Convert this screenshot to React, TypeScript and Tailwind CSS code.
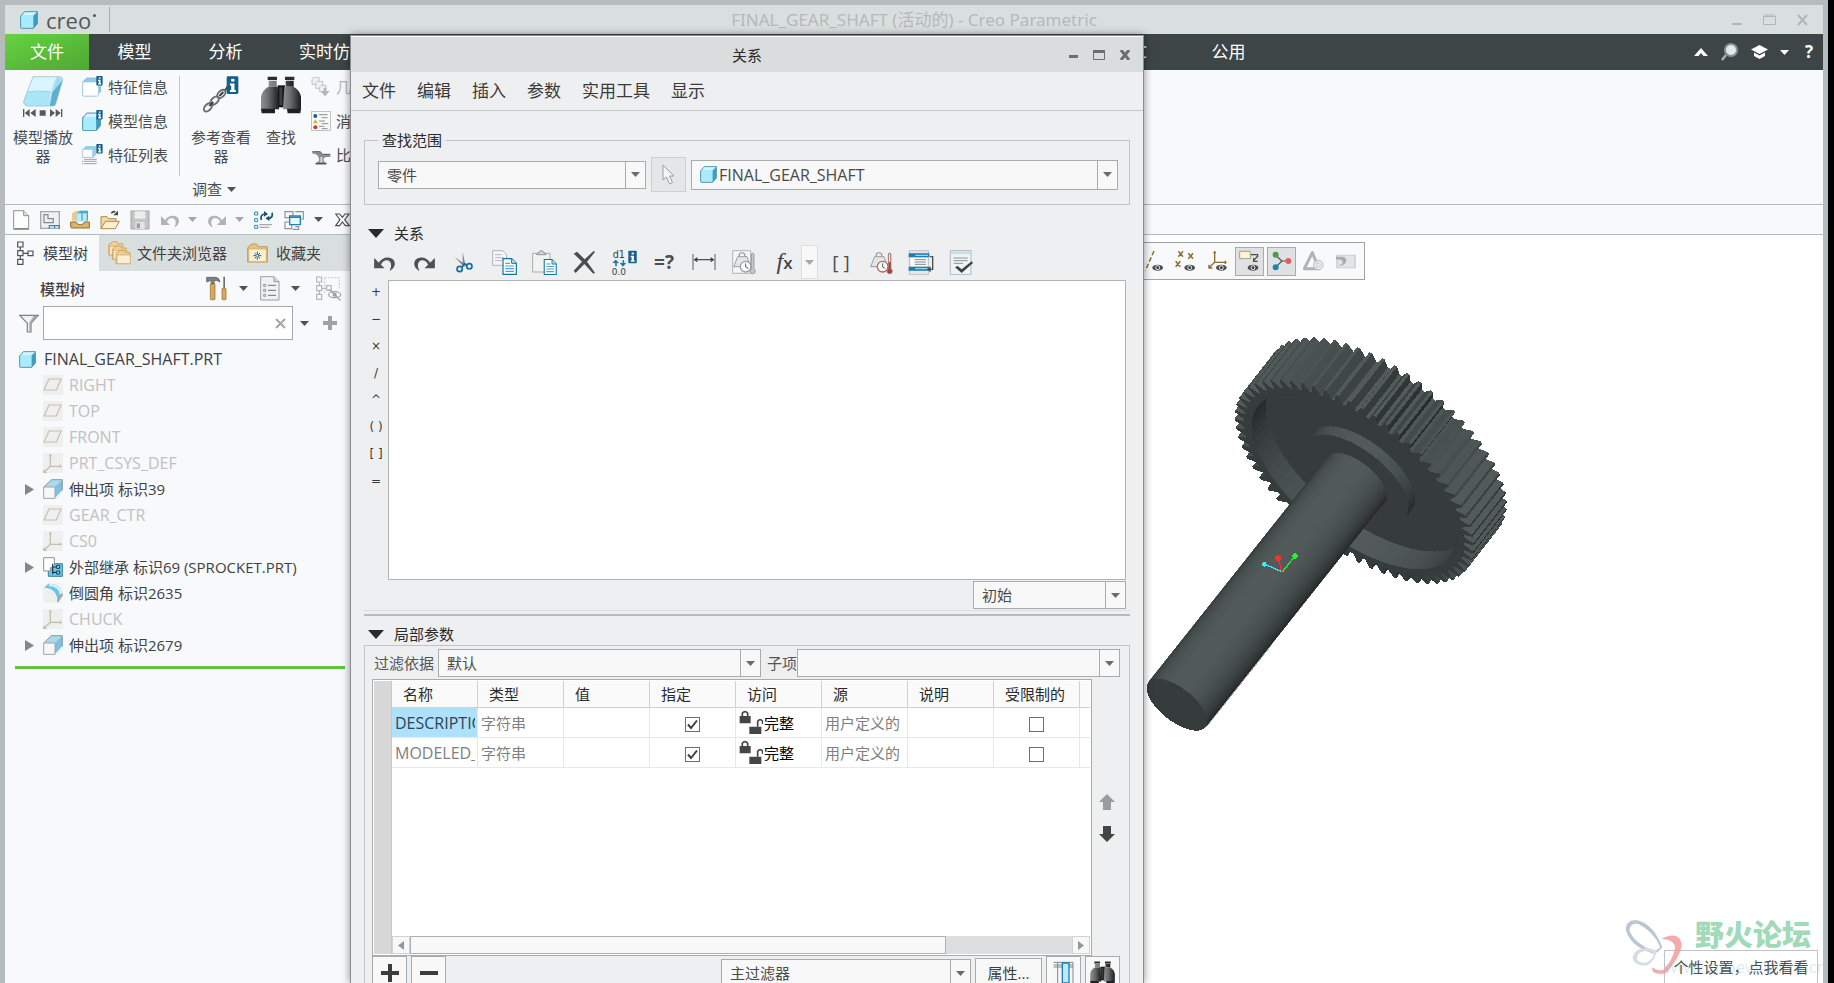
import type { ReactNode } from 'react';

/* ---------- icon helpers ---------- */

interface IconProps {
  w?: number;
  h?: number;
  box?: string;
  children: ReactNode;
}

// most glyphs are drawn on a 60 unit grid and shown at a third of that size
function Icon({ w = 20, h = 20, box, children }: IconProps) {
  return (
    <svg width={w} height={h} viewBox={box ?? `0 0 ${w * 3} ${h * 3}`} fill="none" className="shrink-0" aria-hidden="true">
      {children}
    </svg>
  );
}

function Caret({ color = '#4f5354' }: { color?: string }) {
  return (
    <svg width="9" height="5" viewBox="0 0 9 5" className="shrink-0" aria-hidden="true">
      <path d="M0 0h9L4.5 5z" fill={color} />
    </svg>
  );
}

function InfoBadge({ x, y, s = 1 }: { x: number; y: number; s?: number }) {
  return (
    <g transform={`translate(${x} ${y}) scale(${s})`}>
      <rect width="18" height="27" rx="2" fill="#12608a" />
      <rect x="7" y="4" width="5" height="4" fill="#fff" />
      <path d="M5 11h7v10h2v3H5v-3h2v-7H5z" fill="#fff" />
    </g>
  );
}

function CubeShape({ front = '#a9ecff' }: { front?: string }) {
  return (
    <>
      <path d="M2 14 14 2h38v36L40 52H5q-3 0-3-3z" fill="#3d9dc3" />
      <path d="M2 14 14 2h38L40 14z" fill="#d2f5ff" />
      <path d="M2 16q0-3 3-3h35v39H5q-3 0-3-3z" fill={front} />
      <path d="M2 16 14 2h38v36L40 52H5q-3 0-3-3z" stroke="#3f87a6" strokeWidth="2.5" />
    </>
  );
}

const CubeIcon = ({ size = 17 }: { size?: number }) => (
  <Icon w={size} h={size} box="0 0 54 54">
    <CubeShape />
  </Icon>
);

const FeatureInfoIcon = () => (
  <Icon w={21} h={21} box="0 0 63 63">
    <path d="M2 18 14 6h42v40L44 60H6q-4 0-4-4z" fill="#8fcbe3" stroke="#74b4cf" strokeWidth="2" />
    <path d="M2 22q0-4 4-4h38q5 0 5 5v37H6q-4 0-4-4z" fill="#fff" stroke="#9cc7d8" strokeWidth="2" />
    <InfoBadge x={43} y={0} s={1.05} />
  </Icon>
);

const ModelInfoIcon = () => (
  <Icon w={21} h={21} box="0 0 63 63">
    <g transform="translate(0 7) scale(1.06)">
      <CubeShape />
    </g>
    <InfoBadge x={43} y={0} s={1.05} />
  </Icon>
);

const FeatureListIcon = () => (
  <Icon w={21} h={21} box="0 0 63 63">
    <path d="M2 16 12 6h30v26L32 42H2z" fill="#8fd2ea" />
    <path d="M2 16h30v24H2z" fill="#fff" stroke="#93c8dd" strokeWidth="2" />
    <path d="M6 46h38M0 52h4M6 52h38M0 59h4M6 59h38" stroke="#9fa3a5" strokeWidth="3" />
    <InfoBadge x={43} y={0} s={1.05} />
  </Icon>
);

const PlayerIcon = () => (
  <Icon w={40} h={42} box="0 0 120 126">
    <path d="M30 2h82q8 2 7 10L98 84q-2 6-8 6H14Q2 88 2 76z" fill="#c8edf8" />
    <path d="M88 48 119 12 98 84q-2 6-8 6H80z" fill="#5fb0cf" />
    <path d="M88 48 117 12Q112 2 100 4z" fill="#9adcf2" />
    <path d="M30 2h74q-12 6-22 46Q56 42 12 50z" fill="#d9f5fd" />
    <path d="M12 50q40-6 70 0Q80 70 80 89H14Q2 88 2 76z" fill="#a8e6f8" />
    <path d="M30 2h82q8 2 7 10L98 84q-2 6-8 6H14Q2 88 2 76zM12 48q38-6 72 0" stroke="#8bb9ca" strokeWidth="2" />
    <g fill="#565a5c">
      <path d="M0 99h4v24H0zM20 99v24L5 111zM38 99v24L22 111zM50 103h18v16H50zM81 99v24l15-12zM98 99v24l15-12zM114 99h4v24h-4z" />
    </g>
  </Icon>
);

const ChainIcon = () => (
  <Icon w={38} h={38} box="0 0 114 114">
    <g stroke="#6b7072" strokeWidth="6">
      <ellipse cx="58" cy="54" rx="15" ry="9" transform="rotate(-45 58 54)" />
      <ellipse cx="38" cy="74" rx="15" ry="9" transform="rotate(-45 38 74)" />
      <ellipse cx="18" cy="94" rx="15" ry="9" transform="rotate(-45 18 94)" />
      <path d="m52 60 12-12M22 90l12-12M70 42l8-12" stroke="#3d4143" />
    </g>
    <InfoBadge x={74} y={1} s={1.95} />
  </Icon>
);

const Binoculars = ({ w = 40, h = 39 }: { w?: number; h?: number }) => (
  <Icon w={w} h={h} box="0 0 120 117">
    <defs>
      <linearGradient id="barrel" x1="0" x2="1" y1="0" y2="0">
        <stop offset="0" stopColor="#8d9091" />
        <stop offset=".4" stopColor="#6b6e6f" />
        <stop offset="1" stopColor="#1b1c1c" />
      </linearGradient>
    </defs>
    <path d="M20 2h28v10H20zM72 2h28v10H72z" fill="#2b2d2e" />
    <path d="M23 14h24v18H23zM74 14h24v18H74z" fill="url(#barrel)" />
    <path d="M50 28h22v66H50z" fill="#141515" />
    <path d="M22 32h28l4 68H0V62q4-20 22-30z" fill="url(#barrel)" />
    <path d="M98 32H70l-4 68h54V62q-4-20-22-30z" fill="url(#barrel)" />
    <path d="M0 98h42v14H2zM78 98h42l-2 14H80z" fill="#1f2121" />
    <path d="M55 34h9v54h-9z" fill="#3c3f40" />
  </Icon>
);

const GeomIcon = () => (
  <Icon>
    <g fill="#f0f1f1" stroke="#b9bcbd" strokeWidth="2.5">
      <path d="M3 6 8 1h16v16l-5 5H3z" />
      <path d="M14 18l5-5h16v16l-5 5H14z" />
      <path d="M26 30l5-5h14v14l-5 5H26z" />
    </g>
    <path d="M28 42h10V32h8v10h10L42 58z" fill="#b3b6b7" />
  </Icon>
);

const LogIcon = () => (
  <Icon>
    <path d="M1 1h58v58H1z" fill="#f8f9f9" stroke="#b5b8ba" strokeWidth="3" />
    <circle cx="13" cy="15" r="6" fill="#12608a" />
    <path d="m13 25 7 12H6z" fill="#e5a91b" />
    <circle cx="13" cy="49" r="6" fill="#c43b33" />
    <path d="M24 11h26M32 20h18M24 30h18M32 38h20M24 46h16M32 53h18" stroke="#8c9092" strokeWidth="3" />
  </Icon>
);

const CompareIcon = () => (
  <Icon>
    <path d="M4 20h24l6 8h24v8H44l-6 4v8l8 6v4H14v-4l10-6v-8l-4-8-8-6H4z" fill="#8b8f91" />
    <path d="M4 20h24l6 8h24" stroke="#5d6163" strokeWidth="3" />
    <path d="M14 56h32" stroke="#4d5153" strokeWidth="4" />
    <path d="M28 36h6v16h-6z" fill="#d7d9da" />
  </Icon>
);

/* quick access bar */

const NewIcon = () => (
  <Icon w={17} h={20}>
    <path d="M2 2h30l15 15v41H2z" fill="#fdfdfd" stroke="#8e9294" strokeWidth="3" />
    <path d="M32 2v15h15" fill="#e2e4e5" stroke="#8e9294" strokeWidth="3" />
    <path d="M4 56h42" stroke="#6d7173" strokeWidth="3" />
  </Icon>
);

const DrawingIcon = () => (
  <Icon>
    <path d="M2 5h56v50H2z" fill="#eef0f1" stroke="#a5a9ab" strokeWidth="4" />
    <path d="M12 14h12v12h16v12H12z" stroke="#85898b" strokeWidth="3.5" />
    <path d="M28 57V47h30v10M44 47v8" stroke="#2d8cb8" strokeWidth="3.5" />
  </Icon>
);

const LibraryIcon = () => (
  <Icon>
    <path d="M6 10 18 2h36v30H6z" fill="#f0c98a" />
    <path d="M20 10 30 2h24v30H20z" fill="#4ea9cd" />
    <path d="M20 10h14v26H20zM38 10h12v26H38z" fill="#b7ecfb" />
    <path d="M2 36h16q2 8 13 8t13-8h14v18H6q-4 0-4-4z" fill="#ddb46c" stroke="#8f6a2f" strokeWidth="3" />
  </Icon>
);

const OpenIcon = () => (
  <Icon>
    <path d="M3 56V20h18l5 6h22v10" fill="#f4d9a4" stroke="#b08a4c" strokeWidth="3" />
    <path d="M3 56 16 34h42L46 56z" fill="#fdf0d2" stroke="#b08a4c" strokeWidth="3" />
    <path d="M34 10q6-8 12-4" stroke="#3d4143" strokeWidth="5" />
    <path d="M54 2v14H40z" fill="#3d4143" />
  </Icon>
);

const SaveIcon = () => (
  <Icon>
    <path d="M3 3h54v54H3z" fill="#c3c6c7" stroke="#a3a6a8" strokeWidth="3" />
    <path d="M14 4h32v22H14z" fill="#eceded" />
    <path d="M16 36h28v21H16z" fill="#e3e4e5" />
    <path d="M20 40h10v15H20z" fill="#9c9fa1" />
  </Icon>
);

function UndoIcon({ color, flip = false, w = 20 }: { color: string; flip?: boolean; w?: number }) {
  return (
    <Icon w={w} h={w} box="0 0 60 60">
      <g transform={flip ? 'translate(60 0) scale(-1 1)' : undefined}>
        <path d="M14 32Q24 16 40 17q17 2 17 17-1 12-14 18 6-10 4-19-5-12-16-8-8 3-11 12z" fill={color} />
        <path d="M3 18v27h27z" fill={color} />
      </g>
    </Icon>
  );
}

const RegenIcon = () => (
  <Icon>
    <g stroke="#2d8cb8" strokeWidth="3">
      <path d="M2 6h9v9H2zM2 26h9v9H2zM2 46h9v9H2z" />
    </g>
    <path d="M16 44h38M16 52h30" stroke="#a8abad" strokeWidth="4" />
    <path d="M22 30q-4-16 10-18M54 8q4 14-10 18" stroke="#0f5578" strokeWidth="5" />
    <path d="M30 3l12 9-12 8zM46 17v16l-12-8z" fill="#0f5578" />
  </Icon>
);

const WindowsIcon = () => (
  <Icon>
    <path d="M3 5h24v18H3zM3 36h20v20H3zM34 5h24v22H44M34 50h10v8H26" stroke="#8f9395" strokeWidth="3.5" />
    <path d="M17 18h32v26H17z" fill="#e9f6fb" stroke="#2382ae" strokeWidth="4" />
    <path d="M17 22h32" stroke="#2382ae" strokeWidth="4" />
  </Icon>
);

const CloseWinIcon = () => (
  <Icon w={15} h={14}>
    <path d="M2 3h12l8 10 8-10h12L29 20l14 18H31l-9-11-8 11H2l13-18z" fill="#fdfdfd" stroke="#4b4f51" strokeWidth="3.5" />
  </Icon>
);

/* sidebar */

const TreeTabIcon = () => (
  <Icon w={17} h={25}>
    <path d="M2 3h16v15H2zM2 29h16v15H2zM2 55h16v15H2zM33 30h15v14H33zM10 18v11M10 44v11M18 37h15" stroke="#4d5153" strokeWidth="3.5" />
  </Icon>
);

const FoldersIcon = () => (
  <Icon w={24} h={24}>
    {[0, 13, 26].map((o, i) => (
      <g key={o} transform={`translate(${i * 11} ${o})`}>
        <path d="M2 12q0-4 4-4h2q2-6 6-6h10q5 0 6 6h14v34H2z" fill="#f1cd92" stroke="#c09650" strokeWidth="2" />
        <path d="M5 16h40v26H5z" fill="#fdefcf" stroke="#c9a365" strokeWidth="2" />
      </g>
    ))}
  </Icon>
);

const FavIcon = () => (
  <Icon w={21} h={20} box="0 0 63 60">
    <path d="M2 16q0-4 4-5 4-8 10-8h12q5 2 6 8h27v46H2z" fill="#e9c07c" stroke="#a9803f" strokeWidth="2" />
    <path d="M5 18h53v38H5z" fill="#fdf0d0" stroke="#c9a365" strokeWidth="2" />
    <path d="M31 26v24M19 38h24M23 30l16 16M39 30 23 46" stroke="#0f6488" strokeWidth="3" />
    <circle cx="31" cy="38" r="3" fill="#fff" />
  </Icon>
);

const ToolsIcon = () => (
  <Icon w={21} h={25}>
    <path d="M2 4h28q10 2 12 14-8-6-14-4H12L2 18z" fill="#7d8184" stroke="#4d5153" strokeWidth="2" />
    <path d="M14 16h12v8H14zM52 2h5v34h-5z" fill="#6d7173" />
    <path d="M13 24h14v46q-7 4-14 0z" fill="#d9a95e" stroke="#8f6a2f" strokeWidth="2" />
    <path d="M48 38q6-4 12 0v32q-6 4-12 0z" fill="#d9a95e" stroke="#8f6a2f" strokeWidth="2" />
  </Icon>
);

const ListDocIcon = () => (
  <Icon w={20} h={25}>
    <path d="M2 2h40l15 15v55H2z" fill="#eef2f4" stroke="#9a9ea0" strokeWidth="3" />
    <path d="M42 2v15h15" fill="#d1d5d7" stroke="#9a9ea0" strokeWidth="3" />
    <path d="M24 28h24M24 43h24M24 58h24" stroke="#6d7173" strokeWidth="3" />
    <path d="M11 25h6v6h-6zM11 40h6v6h-6zM11 55h6v6h-6z" stroke="#6d7173" strokeWidth="2" />
  </Icon>
);

const HideTreeIcon = () => (
  <Icon w={26} h={25}>
    <path d="M2 3h15v15H2zM2 29h15v15H2zM2 55h15v15H2zM32 29h14v14H32zM10 18v11M10 44v11M17 37h15" stroke="#b3b6b8" strokeWidth="3.5" />
    <path d="M26 5h44v36M26 5v46" stroke="#c5c8ca" strokeWidth="3" strokeDasharray="6 4" />
    <ellipse cx="56" cy="56" rx="18" ry="9" stroke="#9c9fa1" strokeWidth="3.5" />
    <circle cx="56" cy="56" r="6" fill="#9c9fa1" />
    <path d="m40 40 34 34" stroke="#9c9fa1" strokeWidth="3.5" />
  </Icon>
);

const FunnelIcon = () => (
  <Icon w={20} h={19}>
    <path d="M2 4h56L36 28v26H25V28z" fill="#f0f1f2" stroke="#7d8183" strokeWidth="3.5" />
    <path d="M44 6h12L36 28v24l-5-2V26z" fill="#a5a8aa" />
  </Icon>
);

const PlaneIcon = () => (
  <Icon>
    <path d="M0 0h60v60H0z" fill="#eeefee" />
    <path d="M18 12h36L40 45H3z" stroke="#c3c0ae" strokeWidth="3.5" />
  </Icon>
);

const CsysIcon = () => (
  <Icon>
    <path d="M0 0h60v60H0z" fill="#eeefee" />
    <path d="M22 4v36L4 56M22 40h34M18 8h8M52 35v9M2 50v8h9" stroke="#c3c0ae" strokeWidth="4" />
  </Icon>
);

const ExtrudeIcon = () => (
  <Icon>
    <path d="M2 26 26 2h32v32L36 58H2z" fill="#7fc0dc" />
    <path d="M2 24 26 2h32L36 24z" fill="#a9d9ec" />
    <path d="m36 58 22-24V44L44 58z" fill="#e8f7fc" />
    <path d="M2 24 26 2h32v32" stroke="#7e8a90" strokeWidth="2.5" />
    <path d="M2 24h34v34H2z" fill="#f7f7f7" stroke="#a3a6a8" strokeWidth="3" />
  </Icon>
);

const InheritIcon = () => (
  <Icon>
    <path d="M16 20h42v38H16z" fill="#6cc6e8" stroke="#1b6b92" strokeWidth="2.5" />
    <path d="M2 2h32v30H22v10H2z" fill="#fff" stroke="#8d9193" strokeWidth="3" />
    <path d="M29 20v32M29 30h12M29 46h12" stroke="#14384a" strokeWidth="3.5" />
    <path d="M41 25h9v9h-9zM41 42h9v9h-9z" fill="#9bdcf4" stroke="#14384a" strokeWidth="3" />
  </Icon>
);

const RoundIcon = () => (
  <Icon>
    <path d="M0 0h60v60H0z" fill="#f3f4f5" />
    <path d="M2 14q36 0 40 44H2z" fill="#efefef" />
    <path d="M16 2q40 0 42 34L44 52Q40 16 4 14z" fill="#6ec3e3" />
    <path d="M18 6q32 0 36 28" stroke="#d3f1fb" strokeWidth="8" />
    <path d="m44 58 14-20v-6L44 48z" fill="#b2b5b7" stroke="#8c8f91" strokeWidth="2" />
  </Icon>
);

/* relations toolbar */

const ScissorsIcon = () => (
  <Icon w={20} h={23}>
    <path d="m26 2 8 40-8-4zM2 18l34 24-6 6z" fill="#84888a" />
    <circle cx="17" cy="54" r="8" stroke="#14709c" strokeWidth="5" />
    <circle cx="46" cy="46" r="8" stroke="#14709c" strokeWidth="5" />
    <path d="m24 48 8-10 8 6" stroke="#14709c" strokeWidth="5" />
  </Icon>
);

function DocPair({ paste = false }: { paste?: boolean }) {
  return (
    <Icon w={25} h={25}>
      {paste ? (
        <>
          <path d="M2 10h52v56H2z" fill="#f1f2f2" stroke="#a9acae" strokeWidth="3" />
          <path d="M14 14q0-6 8-6 0-6 6-6t6 6q8 0 8 6z" fill="#d4d6d7" stroke="#8f9395" strokeWidth="3" />
        </>
      ) : (
        <>
          <path d="M2 2h30l12 12v32H2z" fill="#f6f6f6" stroke="#b1b4b6" strokeWidth="3" />
          <path d="M9 14h20M9 23h26M9 32h26" stroke="#b7babc" strokeWidth="3" />
        </>
      )}
      <path d="M33 26h26l14 14v33H33z" fill="#fff" stroke="#14709c" strokeWidth="3.5" transform={paste ? 'translate(7 4) scale(.9 .95)' : undefined} />
      <g transform={paste ? 'translate(7 4) scale(.9 .95)' : undefined}>
        <path d="M59 26v14h14" fill="#bfe6f4" stroke="#14709c" strokeWidth="3" />
        <path d="M40 40h14M40 48h26M40 56h26M40 64h26" stroke="#4aa5cb" strokeWidth="3.5" />
      </g>
    </Icon>
  );
}

const DeleteIcon = () => (
  <Icon w={23} h={23}>
    <path d="M2 8 12 2l23 23L62 0l4 3-24 29 24 33-5 3-27-29L8 66l-6-7 25-27z" fill="#4a4e50" />
  </Icon>
);

const DimToggleIcon = () => (
  <Icon w={25} h={25}>
    <text x="2" y="24" fontSize="29" fill="#3f4345" fontFamily="DejaVu Sans">d1</text>
    <text x="-1" y="75" fontSize="27" fill="#3f4345" fontFamily="DejaVu Sans">0.0</text>
    <path d="M11 48V38H3l8-8 8 8h-6v10zM33 31v9h-8l8 9 8-9h-6v-9z" fill="#14709c" stroke="#14709c" strokeWidth="2" />
    <InfoBadge x={49} y={2} s={1.4} />
  </Icon>
);

const MeasureIcon = () => (
  <Icon w={24} h={18}>
    <path d="M3 3v48M69 3v48" stroke="#5c6062" strokeWidth="3" />
    <path d="M8 20h56" stroke="#3f4345" strokeWidth="3.5" />
    <path d="M5 20 16 12v16zM67 20l-11-8v16z" fill="#3f4345" />
  </Icon>
);

function UnitsIcon({ red = false }: { red?: boolean }) {
  return (
    <Icon w={25} h={25}>
      {!red && <path d="M2 2h54v68H2z" fill="#f4f5f5" stroke="#b1b4b6" strokeWidth="3" />}
      <path d="M5 50 17 20h28l10 30z" fill="#e3e5e6" stroke="#9c9fa1" strokeWidth="3" />
      <path d="M22 20v-8q8-8 16 0v8" stroke="#9c9fa1" strokeWidth="4" />
      <circle cx="41" cy="50" r="16" fill="#fbfbfb" stroke={red ? '#a5705f' : '#9c9fa1'} strokeWidth="4" />
      <path d="M41 40v11l8 4" stroke="#5c6062" strokeWidth="3" />
      <path d="M58 12q4-6 8 0v44q6 5 3 12-7 7-14 0-3-7 3-12z" fill={red ? '#c0392f' : '#c3c6c7'} stroke="#84888a" strokeWidth="2" />
      {red && <path d="M60 12h4v24h-4z" fill="#eee" />}
    </Icon>
  );
}

const SortIcon = () => (
  <Icon w={26} h={25}>
    <path d="M4 2h58v72H4z" fill="#e5e7e8" stroke="#a9acae" strokeWidth="2" />
    <path d="M2 10h62v12H2zM2 50h62v12H2z" fill="#1b80b0" />
    <path d="M22 16h38M22 56h38" stroke="#bfe6f4" strokeWidth="3" />
    <path d="M8 24h50v24H8z" fill="#fbfbfb" />
    <path d="M20 29h34M20 36h34M20 43h34" stroke="#84888a" strokeWidth="3" />
    <path d="M66 20h8v38h-8" stroke="#4a4e50" strokeWidth="4" />
    <path d="M56 58l12-9v18z" fill="#4a4e50" />
  </Icon>
);

const VerifyIcon = () => (
  <Icon w={25} h={25}>
    <path d="M4 2h62v72H4z" fill="#eef3f5" stroke="#b1b9bd" strokeWidth="3" />
    <path d="M5 4h60v8H5z" fill="#c9dfe8" />
    <path d="M14 24h42M14 32h42M14 40h28" stroke="#8f9395" strokeWidth="3" />
    <path d="m18 52 8-4 12 10 30-24 4 5-34 30z" fill="#3f4345" />
  </Icon>
);

/* graphics toolbar */

const Eye = ({ x, y }: { x: number; y: number }) => (
  <g transform={`translate(${x} ${y})`}>
    <ellipse rx="16" ry="9" fill="#4a4e50" />
    <circle r="7" fill="#e9eaeb" />
    <circle r="4" fill="#2c2f30" />
  </g>
);

const AxisEye = () => (
  <Icon w={20} h={22}>
    <path d="M30 3 4 62" stroke="#8b6d2f" strokeWidth="4.5" strokeDasharray="14 7" />
    <Eye x={41} y={53} />
  </Icon>
);

const PointEye = () => (
  <Icon w={21} h={22}>
    <path d="M10 4l14 16M24 4 10 20M40 10l14 16M54 10 40 26M2 34l14 16M16 34 2 50" stroke="#8b6d2f" strokeWidth="4.5" />
    <Eye x={44} y={53} />
  </Icon>
);

const CsysEye = () => (
  <Icon w={20} h={22}>
    <path d="M20 3v34L3 53M20 37h36M16 8h8M52 32v10M3 44v10h10" stroke="#8b6d2f" strokeWidth="4" />
    <Eye x={40} y={53} />
  </Icon>
);

const NoteEye = () => (
  <Icon w={21} h={22}>
    <path d="M2 4h32v22H2z" fill="#fdf3d6" stroke="#a5a08c" strokeWidth="3" />
    <path d="M36 14h20v8M56 18 42 34M44 24v10h12" stroke="#4a4e50" strokeWidth="3.5" />
    <Eye x={42} y={53} />
  </Icon>
);

const SpinIcon = () => (
  <Icon w={20} h={20}>
    <path d="m10 12 20 18L10 50M30 30h18" stroke="#4a4e50" strokeWidth="3.5" />
    <circle cx="11" cy="11" r="9" fill="#4f9a48" />
    <circle cx="11" cy="49" r="9" fill="#2480b0" />
    <circle cx="49" cy="30" r="9" fill="#dd6158" />
  </Icon>
);

const WarnIcon = () => (
  <Icon w={21} h={20}>
    <path d="M28 5 4 53h44z" stroke="#b1b4b6" strokeWidth="9" strokeLinejoin="round" />
    <circle cx="46" cy="42" r="14" fill="#ececed" stroke="#b7babc" strokeWidth="3" />
    <path d="M42 34v16l11-8z" fill="#fff" stroke="#a9acae" strokeWidth="2" />
  </Icon>
);

const PauseIcon = () => (
  <Icon w={20} h={15}>
    <path d="M0 2h60v41H0z" fill="#d3d5d6" />
    <path d="M6 6h48v33H6z" fill="#e3e4e5" />
    <path d="M0 8h20q14 2 10 16-6 12-24 12 18-8 14-14-4-6-20-6z" fill="#a9acae" />
  </Icon>
);

const ColumnsIcon = () => (
  <Icon w={21} h={24} box="0 0 63 72">
    <path d="M2 4h58v64H2z" fill="#f6f6f6" />
    <path d="M2 4h58M2 12h58M2 18h58M14 4v64M60 4v64" stroke="#84888a" strokeWidth="3" />
    <path d="M28 6h20v60H28z" fill="#bfe9f8" stroke="#1b80b0" strokeWidth="4" />
  </Icon>
);

/* ---------- shaded gear and shaft ---------- */

type Pt = [number, number];

const U: Pt = [0.6165, -0.7874]; // projected axis, pointing away from the viewer
const V: Pt = [0.7874, 0.6165];
const SQUASH = 0.458;
const LIGHT = (105 * Math.PI) / 180;

function at(c: Pt, r: number, a: number): Pt {
  const p = r * Math.cos(a);
  const q = r * SQUASH * Math.sin(a);
  return [c[0] + p * V[0] + q * U[0], c[1] + p * V[1] + q * U[1]];
}

const along = (c: Pt, d: number): Pt => [c[0] + d * U[0], c[1] + d * U[1]];
const toPoints = (pts: Pt[]) => pts.map((p) => `${p[0].toFixed(1)},${p[1].toFixed(1)}`).join(' ');

function shade(normal: number) {
  const k = Math.max(0, Math.cos(normal - LIGHT));
  const mix = (a: number, b: number) => Math.round(a + (b - a) * k);
  return `rgb(${mix(40, 82)},${mix(44, 91)},${mix(45, 90)})`;
}

function ring(c: Pt, r: number) {
  return toPoints(Array.from({ length: 96 }, (_, i) => at(c, r, (i * Math.PI) / 48)));
}

function Wall({ a, b, r, from, to, inside = false }: { a: Pt; b: Pt; r: number; from: number; to: number; inside?: boolean }) {
  const n = 48;
  const step = (to - from) / n;
  return (
    <>
      {Array.from({ length: n }, (_, i) => {
        const t0 = from + i * step;
        const t1 = t0 + step;
        const fill = shade((t0 + t1) / 2 + (inside ? Math.PI : 0));
        return <polygon key={i} points={toPoints([at(a, r, t0), at(a, r, t1), at(b, r, t1), at(b, r, t0)])} fill={fill} stroke={fill} />;
      })}
    </>
  );
}

const TEETH = 60;
const TIP = 428;
const ROOT = 394;

const profile = Array.from({ length: TEETH }, (_, i) => {
  const p = (2 * Math.PI) / TEETH;
  const t = i * p;
  return [
    { r: ROOT, t },
    { r: ROOT, t: t + 0.26 * p },
    { r: TIP, t: t + 0.52 * p },
    { r: TIP, t: t + 0.74 * p },
  ];
}).flat();

const FACE: Pt = [642, 756];
const BOSS: Pt = [649, 747];
const SHAFT_END: Pt = [111, 1424];

function GearModel() {
  const back = along(FACE, 163);
  const floor = along(FACE, 68);
  const sides = profile
    .map((p, i) => {
      const q = profile[(i + 1) % profile.length];
      const dx = q.r * Math.cos(q.t) - p.r * Math.cos(p.t);
      const dy = q.r * Math.sin(q.t) - p.r * Math.sin(p.t);
      return { p, q, normal: Math.atan2(-dx, dy), depth: Math.sin((p.t + q.t) / 2) };
    })
    .sort((m, n) => m.depth - n.depth);

  return (
    <svg width="400" height="515" viewBox="0 15 1200 1545" shapeRendering="crispEdges" className="absolute top-0 left-[790px]" aria-label="FINAL_GEAR_SHAFT">
      <defs>
        <clipPath id="recess">
          <polygon points={ring(FACE, 367)} />
        </clipPath>
      </defs>
      {sides.map(({ p, q, normal }, i) => (
        <polygon key={i} points={toPoints([at(FACE, p.r, p.t), at(FACE, q.r, q.t), at(back, q.r, q.t), at(back, p.r, p.t)])} fill={shade(normal)} />
      ))}
      <polygon points={toPoints(profile.map((p) => at(FACE, p.r, p.t)))} fill="#363c3b" />
      <g clipPath="url(#recess)">
        <Wall a={FACE} b={floor} r={367} from={Math.PI * 0.8} to={Math.PI * 2.1} inside />
        <polygon points={ring(floor, 367)} fill="#363c3b" />
      </g>
      <Wall a={BOSS} b={along(BOSS, 31)} r={187} from={0} to={Math.PI} />
      <polygon points={ring(BOSS, 187)} fill="#363c3b" />
      <Wall a={SHAFT_END} b={BOSS} r={109} from={0} to={Math.PI} />
      <polygon points={ring(SHAFT_END, 109)} fill="#363c3b" />
      <g strokeWidth="4">
        <path d="m427 1026-54-24" stroke="#3de8ef" />
        <path d="m427 1026-13-40" stroke="#f03030" />
        <path d="m427 1026 38-48" stroke="#2fe82f" />
      </g>
      <circle cx="373" cy="1003" r="7" fill="#3de8ef" />
      <circle cx="414" cy="985" r="9" fill="#f93131" />
      <circle cx="465" cy="978" r="8" fill="#2ff02f" />
    </svg>
  );
}

/* ---------- controls ---------- */

interface ComboProps {
  label: string;
  value?: string;
  icon?: ReactNode;
  className?: string;
}

function Combo({ label, value = '', icon, className = '' }: ComboProps) {
  return (
    <div className={`flex border border-[#a8acae] bg-[#f8f8f8] ${className}`}>
      <div className="flex min-w-0 flex-1 items-center gap-0.5 pl-2">
        {icon}
        <select aria-label={label} className="h-full min-w-0 flex-1 appearance-none bg-transparent text-[#4a4a4a] outline-none">
          <option>{value}</option>
        </select>
      </div>
      <span className="flex w-5 items-center justify-center border-l border-[#a8acae]">
        <Caret color="#6b6b6b" />
      </span>
    </div>
  );
}

function Check({ label, on = false }: { label: string; on?: boolean }) {
  return (
    <span className="inline-grid align-middle">
      <input type="checkbox" aria-label={label} defaultChecked={on} className="peer h-[15px] w-[15px] appearance-none border border-[#6e6e6e] bg-white [grid-area:1/1]" />
      <svg width="15" height="15" viewBox="0 0 15 15" className="pointer-events-none hidden [grid-area:1/1] peer-checked:block" aria-hidden="true">
        <path d="M3 7.500 6 11l6-7.500" stroke="#3c3c3c" strokeWidth="2" fill="none" />
      </svg>
    </span>
  );
}

function SectionTitle({ children }: { children: ReactNode }) {
  return (
    <h3 className="flex h-[22px] items-center gap-[10px] pl-1 text-[#2a2a2a]">
      <svg width="16" height="9" viewBox="0 0 16 9" aria-hidden="true">
        <path d="M0 0h16L8 9z" fill="#2b2b2b" />
      </svg>
      {children}
    </h3>
  );
}

/* ---------- main window ---------- */

function TitleBar() {
  return (
    <header className="relative flex h-[29px] items-center justify-between bg-[#d9dfde] pr-[14px] pl-[15px]">
      <div className="flex h-[25px] w-[90px] items-center border-r border-[#a9afb0]">
        <CubeIcon size={18} />
        <span className="ml-2 font-['Open_Sans',sans-serif] text-[22px] leading-6 font-medium text-[#54585a]">creo</span>
        <span className="mb-2 ml-0.5 h-[3px] w-[3px] rounded-full bg-[#54585a]" />
      </div>
      <h1 className="absolute inset-x-0 text-center font-['Noto_Sans','Noto_Sans_CJK_SC',sans-serif] text-[17px] text-[#b4b9b9]">FINAL_GEAR_SHAFT (活动的) - Creo Parametric</h1>
      <div className="relative flex items-center gap-5 text-[#b0b6b6]">
        <button aria-label="最小化" className="h-[13px] w-3">
          <svg width="12" height="13" viewBox="0 0 12 13"><path d="M1 11h10" stroke="currentColor" strokeWidth="2" /></svg>
        </button>
        <button aria-label="最大化">
          <svg width="13" height="13" viewBox="0 0 13 13"><path d="M1 2h11M.5 3.500h12v8H.5z" stroke="currentColor" fill="none" /></svg>
        </button>
        <button aria-label="关闭">
          <svg width="13" height="13" viewBox="0 0 13 13"><path d="m2 2 9 10M11 2 2 12" stroke="currentColor" strokeWidth="2" /></svg>
        </button>
      </div>
    </header>
  );
}

function RibbonTabs() {
  return (
    <nav className="flex h-9 items-center bg-[#3d4546] text-[17px] text-white">
      <button className="h-full w-[84px] bg-gradient-to-br from-[#66d343] to-[#4fa733]">文件</button>
      <button className="w-[91px]">模型</button>
      <button className="w-[91px]">分析</button>
      <button className="w-[124px]">实时仿真</button>
      <button className="w-[788px] pr-9 text-right">NC</button>
      <button className="w-[91px]">公用</button>
      <div className="ml-auto flex items-center gap-3 pr-[6px]">
        <svg width="14" height="8" viewBox="0 0 14 8"><path d="M7 0l7 8H9.500L7 5 4.500 8H0z" fill="#fff" /></svg>
        <svg width="19" height="20" viewBox="0 0 19 20">
          <circle cx="11" cy="8" r="6" fill="#dfeaec" stroke="#8a9294" strokeWidth="2" />
          <path d="m6 13-4 5" stroke="#a9afb0" strokeWidth="2.500" />
        </svg>
        <svg width="17" height="14" viewBox="0 0 17 14">
          <path d="M8.500 0 17 4.500 8.500 9 0 4.500z" fill="#fff" />
          <path d="M3 7.500v3.500l5.500 3 5.500-3V7.500l-5.500 3z" fill="#fff" />
        </svg>
        <Caret color="#fff" />
        <span className="w-4 text-center text-[17px] font-bold">?</span>
      </div>
    </nav>
  );
}

const smallCommands = [
  { label: '特征信息', icon: <FeatureInfoIcon /> },
  { label: '模型信息', icon: <ModelInfoIcon /> },
  { label: '特征列表', icon: <FeatureListIcon /> },
];

const checkCommands = [
  { label: '几何检查', icon: <GeomIcon />, off: true },
  { label: '消息日志', icon: <LogIcon />, off: false },
  { label: '比较零件', icon: <CompareIcon />, off: false },
];

function Ribbon() {
  return (
    <section className="h-[135px] border-b border-[#aebcbe] bg-[#f7f9fb] text-[#4a4d4f]">
      <div className="flex h-[106px] pt-[6px] pl-2">
        <button className="flex w-[60px] flex-col items-center gap-[10px] leading-[19px]">
          <PlayerIcon />
          模型播放器
        </button>
        <div className="ml-[9px] flex flex-col gap-[13px] border-r border-[#c3c8ca] pr-[11px]">
          {smallCommands.map((c) => (
            <button key={c.label} className="flex h-[21px] items-center gap-[5px]">
              {c.icon}
              {c.label}
            </button>
          ))}
        </div>
        <button className="ml-[11px] flex w-[60px] flex-col items-center gap-[14px] leading-[19px]">
          <ChainIcon />
          参考查看器
        </button>
        <button className="ml-[10px] flex w-10 flex-col items-center gap-[13px] leading-[19px]">
          <Binoculars />
          查找
        </button>
        <div className="ml-[10px] flex flex-col gap-[13px]">
          {checkCommands.map((c) => (
            <button key={c.label} className={`flex h-[21px] items-center gap-[5px] ${c.off ? 'text-[#b3b5b6]' : ''}`}>
              {c.icon}
              {c.label}
            </button>
          ))}
        </div>
      </div>
      <button className="ml-[187px] flex h-[26px] items-center gap-[5px]">
        调查 <Caret />
      </button>
    </section>
  );
}

function QuickBar() {
  return (
    <div className="flex h-[30px] items-center gap-[10px] border-b border-[#aebcbe] bg-[#f7f9fb] pl-2">
      <button aria-label="新建"><NewIcon /></button>
      <button aria-label="绘图"><DrawingIcon /></button>
      <button aria-label="模型库"><LibraryIcon /></button>
      <button aria-label="打开"><OpenIcon /></button>
      <button aria-label="保存"><SaveIcon /></button>
      <button aria-label="撤消" className="flex items-center gap-2"><UndoIcon color="#b1b4b6" /><Caret color="#a5a8aa" /></button>
      <button aria-label="重做" className="flex items-center gap-2"><UndoIcon color="#b1b4b6" flip /><Caret color="#a5a8aa" /></button>
      <button aria-label="重新生成"><RegenIcon /></button>
      <button aria-label="窗口" className="flex items-center gap-[10px]"><WindowsIcon /><Caret /></button>
      <button aria-label="关闭窗口" className="ml-0.5"><CloseWinIcon /></button>
    </div>
  );
}

const tree = [
  { name: 'RIGHT', icon: <PlaneIcon />, off: true },
  { name: 'TOP', icon: <PlaneIcon />, off: true },
  { name: 'FRONT', icon: <PlaneIcon />, off: true },
  { name: 'PRT_CSYS_DEF', icon: <CsysIcon />, off: true },
  { name: '伸出项 标识39', icon: <ExtrudeIcon />, open: true },
  { name: 'GEAR_CTR', icon: <PlaneIcon />, off: true },
  { name: 'CS0', icon: <CsysIcon />, off: true },
  { name: '外部继承 标识69 (SPROCKET.PRT)', icon: <InheritIcon />, open: true },
  { name: '倒圆角 标识2635', icon: <RoundIcon /> },
  { name: 'CHUCK', icon: <CsysIcon />, off: true },
  { name: '伸出项 标识2679', icon: <ExtrudeIcon />, open: true },
];

function Sidebar() {
  return (
    <aside className="w-[345px] shrink-0 bg-[#f7f9fb] text-[#3f4244]">
      <div className="flex h-9 bg-[#d9dfde]">
        <button className="flex w-[94px] items-center gap-[9px] bg-[#f7f9fb] pl-3">
          <TreeTabIcon />
          模型树
        </button>
        <button className="ml-[9px] flex items-center gap-[5px]">
          <FoldersIcon />
          文件夹浏览器
        </button>
        <button className="ml-5 flex items-center gap-2">
          <FavIcon />
          收藏夹
        </button>
      </div>
      <div className="flex h-[35px] items-center pl-[35px]">
        <h2 className="w-[166px] font-medium">模型树</h2>
        <button aria-label="设置" className="flex items-center gap-3"><ToolsIcon /><Caret /></button>
        <button aria-label="显示" className="ml-3 flex items-center gap-[11px]"><ListDocIcon /><Caret /></button>
        <button aria-label="隐藏" className="ml-4"><HideTreeIcon /></button>
      </div>
      <div className="flex h-[34px] items-center pl-[14px]">
        <FunnelIcon />
        <div className="ml-1 flex h-[34px] w-[250px] items-center border border-[#9fabae] bg-white pr-[6px]">
          <input aria-label="过滤模型树" className="h-full min-w-0 flex-1 px-2 outline-none" />
          <button aria-label="清除">
            <svg width="11" height="11" viewBox="0 0 11 11"><path d="m1 1 9 9M10 1l-9 9" stroke="#a3a6a8" strokeWidth="2" /></svg>
          </button>
        </div>
        <button aria-label="过滤选项" className="ml-[7px]"><Caret /></button>
        <button aria-label="添加" className="ml-[14px]">
          <svg width="14" height="14" viewBox="0 0 14 14"><path d="M7 0v14M0 7h14" stroke="#a0a3a5" strokeWidth="4" /></svg>
        </button>
      </div>
      <ul className="mt-[6px]">
        <li className="flex h-[26px] items-center gap-2 pl-[14px] text-base">
          <CubeIcon />
          FINAL_GEAR_SHAFT.PRT
        </li>
        {tree.map((n) => (
          <li key={n.name} className={`flex h-[26px] items-center pl-5 ${n.off ? 'text-base text-[#bfc1c2]' : ''}`}>
            <span className="w-[18px]">
              {n.open && (
                <svg width="9" height="11" viewBox="0 0 9 11"><path d="M0 0l9 5.500L0 11z" fill="#848688" /></svg>
              )}
            </span>
            {n.icon}
            <span className="ml-[6px]">{n.name}</span>
          </li>
        ))}
      </ul>
      <div className="mt-2 mr-[5px] ml-[10px] h-[3px] bg-[#5fc33f]" />
    </aside>
  );
}

function Watermark() {
  return (
    <div className="absolute right-0 bottom-0 h-[67px] w-[204px]">
      <div className="absolute top-0 right-3 text-[29px] leading-[38px] font-black text-[#a0dab8]">野火论坛</div>
      <div className="absolute right-[5px] bottom-0 h-[33px] w-[154px] border border-b-0 border-[#bfc2cb] bg-white/90 text-center leading-8 text-[#4a4a4a]">
        个性设置，点我看看
      </div>
      <svg width="60" height="58" viewBox="0 0 180 174" fill="none" className="absolute top-0.5 left-1 opacity-90">
        <path fillRule="evenodd" d="M8 34Q8 8 38 6q52 8 80 82-10 14-24 20Q20 86 8 34zm12 4q12 36 74 62 10-4 18-12Q92 40 46 18 20 14 20 38z" fill="#b3c2cf" />
        <path fillRule="evenodd" d="M100 98Q78 86 48 94q-22 14-18 30 6 20 42 18 26-14 28-44zm-6 8q-6 22-26 28-24 0-26-12 0-18 20-22 20-2 32 6z" fill="#d0dae1" />
        <path fillRule="evenodd" d="M116 62q50-24 60 14 2 32-46 88-20 8-40-2l-4-14q20 12 34 8 30-30 36-66 0-24-40-28z" fill="#f0a5a6" />
      </svg>
      <div className="absolute -right-1 bottom-1 text-[17px] leading-6 text-[#5fb5c4]/25">www.proewildfire.cn</div>
    </div>
  );
}

function Graphics() {
  return (
    <main className="relative flex-1 overflow-hidden bg-white">
      <GearModel />
      <div className="relative mt-[7px] ml-[760px] flex h-[38px] w-[255px] items-center justify-end gap-[3px] border border-[#a0a3a5] bg-[#f7f9fb] pr-1">
        <button aria-label="轴显示" className="flex h-[29px] w-[29px] items-center justify-center"><AxisEye /></button>
        <button aria-label="点显示" className="flex h-[29px] w-[29px] items-center justify-center"><PointEye /></button>
        <button aria-label="坐标系显示" className="flex h-[29px] w-[29px] items-center justify-center"><CsysEye /></button>
        <button aria-label="注释显示" className="flex h-[29px] w-[29px] items-center justify-center border border-[#a8acae] bg-[#dfe1e3]"><NoteEye /></button>
        <button aria-label="旋转中心" className="flex h-[29px] w-[29px] items-center justify-center border border-[#a8acae] bg-[#dfe1e3]"><SpinIcon /></button>
        <button aria-label="模拟" className="flex h-[29px] w-[29px] items-center justify-center"><WarnIcon /></button>
        <button aria-label="暂停" className="flex h-[29px] w-[29px] items-center justify-center"><PauseIcon /></button>
      </div>
      <Watermark />
    </main>
  );
}

/* ---------- relations dialog ---------- */

const operators = ['+', '−', '×', '/', '^', '( )', '[ ]', '='];

const relationTools = [
  { label: '撤消', icon: <UndoIcon color="#4a5456" w={23} /> },
  { label: '重做', icon: <UndoIcon color="#4a5456" flip w={23} /> },
  { label: '剪切', icon: <ScissorsIcon /> },
  { label: '复制', icon: <DocPair /> },
  { label: '粘贴', icon: <DocPair paste /> },
  { label: '删除', icon: <DeleteIcon /> },
  { label: '切换尺寸', icon: <DimToggleIcon /> },
  { label: '计算', icon: <span className="text-[19px] leading-5 font-bold text-[#4a4e50]">=?</span> },
  { label: '测量', icon: <MeasureIcon /> },
  { label: '单位', icon: <UnitsIcon /> },
];

const columns = ['名称', '类型', '值', '指定', '访问', '源', '说明', '受限制的'];

const params = [
  { name: 'DESCRIPTION', selected: true },
  { name: 'MODELED_BY', selected: false },
];

const Locks = () => (
  <Icon w={24} h={25}>
    <path d="M2 18h33v22H2zM31 50h36v22H31z" fill="#454545" />
    <path d="M10 18v-8q8-10 16 0v8M56 50V34q8-10 15 0v8" stroke="#454545" strokeWidth="5" />
  </Icon>
);

function ParamTable() {
  return (
    <div className="flex h-[277px] w-[720px] shrink-0 border border-[#a8acae] bg-white p-px">
      <div className="w-[18px] border-r border-[#c6c9cb] bg-[#d7d7d7]" />
      <div className="flex min-w-0 flex-1 flex-col">
        <table className="w-full table-fixed border-separate border-spacing-0 text-left">
          <thead>
            <tr className="h-[27px] bg-[#fafafa] text-[#2a2a2a]">
              {columns.map((c) => (
                <th key={c} className="w-[86px] border-r border-b border-[#cdd2d4] pl-[11px] font-normal">{c}</th>
              ))}
              <th className="border-b border-[#cdd2d4]" />
            </tr>
          </thead>
          <tbody>
            {params.map((p) => (
              <tr key={p.name} className="h-[30px] text-[#808080] [&>td]:border-r [&>td]:border-b [&>td]:border-[#e6e9eb]">
                <td className={`pr-0.5 pl-[3px] text-base leading-5 ${p.selected ? 'bg-[#ade1fe] text-[#2f4450]' : ''}`}>
                  <div className="overflow-hidden whitespace-nowrap">{p.name}</div>
                </td>
                <td className="pl-[3px]">字符串</td>
                <td />
                <td className="text-center"><Check label={`指定 ${p.name}`} on /></td>
                <td>
                  <span className="flex h-[29px] items-center gap-px pl-[3px] text-black"><Locks />完整</span>
                </td>
                <td className="pl-[3px] whitespace-nowrap">用户定义的</td>
                <td />
                <td className="text-center"><Check label={`受限制的 ${p.name}`} /></td>
                <td className="border-r-0!" />
              </tr>
            ))}
          </tbody>
        </table>
        <div className="mt-auto flex h-[18px] bg-[#dcdee0]">
          <button aria-label="向左滚动" className="flex w-[18px] items-center justify-center border border-[#d0d3d5] bg-[#f8f8f8]">
            <svg width="6" height="9" viewBox="0 0 6 9"><path d="M6 0v9L0 4.500z" fill="#949799" /></svg>
          </button>
          <div className="w-[536px] border border-[#aeb1b3] bg-[#f8f8f8]" />
          <button aria-label="向右滚动" className="ml-auto flex w-[18px] items-center justify-center border border-[#d0d3d5] bg-[#f8f8f8]">
            <svg width="6" height="9" viewBox="0 0 6 9"><path d="M0 0v9l6-4.500z" fill="#949799" /></svg>
          </button>
        </div>
      </div>
    </div>
  );
}

function RelationsDialog() {
  return (
    <div role="dialog" aria-label="关系" className="absolute top-[35px] bottom-0 left-[350px] flex w-[794px] flex-col overflow-hidden border border-b-0 border-[#8a8d8f] bg-[#edeff1] shadow-[0_0_8px_rgba(0,0,0,0.45)]">
      <div className="relative flex h-9 shrink-0 items-center justify-center border-t border-white bg-[#d9dddd] text-[#2a2a2a]">
        关系
        <div className="absolute right-[13px] flex items-center gap-[15px] text-[#6a6e70]">
          <button aria-label="最小化">
            <svg width="9" height="10" viewBox="0 0 9 10"><path d="M0 6.500h9" stroke="currentColor" strokeWidth="3" /></svg>
          </button>
          <button aria-label="最大化">
            <svg width="12" height="10" viewBox="0 0 12 10"><path d="M.5 1.500h11v8H.5z" fill="none" stroke="currentColor" /><path d="M0 1.500h12" stroke="currentColor" strokeWidth="3" /></svg>
          </button>
          <button aria-label="关闭">
            <svg width="10" height="10" viewBox="0 0 10 10"><path d="m1 0 8 10M9 0 1 10" stroke="currentColor" strokeWidth="3" /></svg>
          </button>
        </div>
      </div>
      <nav className="flex h-[39px] shrink-0 items-center gap-[21px] border-b border-[#c3c7c9] pl-[11px] text-[17px] text-[#3a3a3a]">
        <button>文件</button>
        <button>编辑</button>
        <button>插入</button>
        <button>参数</button>
        <button>实用工具</button>
        <button>显示</button>
      </nav>

      <div className="flex flex-col px-[13px]">
        <fieldset className="mt-[19px] border border-[#c0c4c6] pr-[11px] pb-3 pl-[13px]">
          <legend className="px-1 leading-[21px] text-[#2a2a2a]">查找范围</legend>
          <div className="flex items-center gap-[5px] pt-[6px]">
            <Combo label="对象类型" value="零件" className="h-7 w-[268px]" />
            <button aria-label="选择" className="flex h-[35px] w-[35px] items-center justify-center border border-[#cdd0d2] bg-[#e4e6e8]">
              <svg width="13" height="21" viewBox="0 0 13 21"><path d="M1 1v15l3.500-3 3 7 3-1.500-3-6.500H12z" fill="#f4f5f5" stroke="#9c9fa1" /></svg>
            </button>
            <Combo label="对象" value="FINAL_GEAR_SHAFT" icon={<CubeIcon />} className="h-[30px] flex-1 text-base" />
          </div>
        </fieldset>

        <div className="mt-[17px]">
          <SectionTitle>关系</SectionTitle>
        </div>
        <div className="flex h-9 items-center">
          {relationTools.map((t) => (
            <button key={t.label} aria-label={t.label} className="flex w-10 items-center justify-center">{t.icon}</button>
          ))}
          <button aria-label="函数" className="flex w-[37px] items-baseline justify-center pl-1 leading-6 text-[#3f4345]">
            <span className="font-['Liberation_Serif',serif] text-[24px] italic">f</span>
            <span className="text-[17px] font-semibold">x</span>
          </button>
          <button aria-label="函数列表" className="flex h-[34px] w-[17px] items-center justify-center border border-[#dcdee0] bg-[#f8f8f8]"><Caret color="#a5a8aa" /></button>
          <button aria-label="方括号" className="ml-[3px] w-10 text-[19px] leading-6 font-medium text-[#4a4e50]">[ ]</button>
          <button aria-label="单位敏感" className="flex w-10 justify-center"><UnitsIcon red /></button>
          <button aria-label="排序" className="flex w-10 justify-center"><SortIcon /></button>
          <button aria-label="校验" className="flex w-10 justify-center"><VerifyIcon /></button>
        </div>

        <div className="flex pr-1">
          <div className="-mt-0.5 flex w-6 flex-col font-['DejaVu_Sans',sans-serif] text-xs text-[#3a3a3a]">
            {operators.map((o) => (
              <button key={o} className="h-[27px]">{o}</button>
            ))}
          </div>
          <textarea aria-label="关系" className="h-[300px] flex-1 resize-none border border-[#b0b3b5] bg-white outline-none" />
        </div>
        <Combo label="求解阶段" value="初始" className="mt-px mr-1 ml-auto h-7 w-[153px]" />
        <div className="mt-px h-[6px] border-t border-b-2 border-t-[#d6e0e7] border-b-[#b8babc]" />

        <div className="mt-[7px]">
          <SectionTitle>局部参数</SectionTitle>
        </div>
        <div className="border border-b-0 border-[#c0c4c6] pt-[3px] pl-[7px]">
          <div className="flex items-center pr-[9px] pl-0.5 text-[#555]">
            过滤依据
            <Combo label="过滤依据" value="默认" className="ml-1 h-7 w-[323px]" />
            <span className="ml-[6px]">子项</span>
            <Combo label="子项" className="h-7 flex-1" />
          </div>
          <div className="mt-0.5 flex">
            <ParamTable />
            <div className="mt-[115px] flex w-[30px] flex-col items-center gap-4">
              <button aria-label="上移"><svg width="16" height="16" viewBox="0 0 16 16"><path d="m8 0 8 8h-4v8H4V8H0z" fill="#9c9c9c" /></svg></button>
              <button aria-label="下移"><svg width="16" height="16" viewBox="0 0 16 16"><path d="m8 16 8-8h-4V0H4v8H0z" fill="#454545" /></svg></button>
            </div>
          </div>
          <div className="flex h-[34px] items-center gap-1 pr-[9px] text-[#3f3f3f]">
            <button aria-label="添加参数" className="flex h-[34px] w-[35px] items-center justify-center border border-[#a8acae] bg-[#f8f8f8]">
              <svg width="18" height="18" viewBox="0 0 18 18"><path d="M9 0v18M0 9h18" stroke="#3c3c3c" strokeWidth="4" /></svg>
            </button>
            <button aria-label="删除参数" className="flex h-[34px] w-[35px] items-center justify-center border border-[#a8acae] bg-[#f8f8f8]">
              <svg width="18" height="18" viewBox="0 0 18 18"><path d="M0 9h18" stroke="#3c3c3c" strokeWidth="4" /></svg>
            </button>
            <Combo label="主过滤器" value="主过滤器" className="ml-auto h-7 w-[250px]" />
            <button className="h-[30px] w-[67px] border border-[#a8acae] bg-[#f8f8f8]">属性...</button>
            <button aria-label="列" className="flex h-[34px] w-[35px] items-center justify-center border border-[#a8acae] bg-[#f8f8f8]"><ColumnsIcon /></button>
            <button aria-label="查找参数" className="flex h-[34px] w-[35px] items-center justify-center border border-[#a8acae] bg-[#f8f8f8]"><Binoculars w={25} h={24} /></button>
          </div>
        </div>
      </div>
    </div>
  );
}

export default function App() {
  return (
    <div className="relative h-screen overflow-hidden bg-black pr-[6px] font-['Open_Sans','Noto_Sans_CJK_SC',sans-serif] text-[15px] leading-5">
      <div className="flex h-full flex-col border-[5px] border-b-0 border-[#b6bbbe]">
        <TitleBar />
        <RibbonTabs />
        <Ribbon />
        <QuickBar />
        <div className="flex min-h-0 flex-1">
          <Sidebar />
          <Graphics />
        </div>
      </div>
      <RelationsDialog />
    </div>
  );
}
